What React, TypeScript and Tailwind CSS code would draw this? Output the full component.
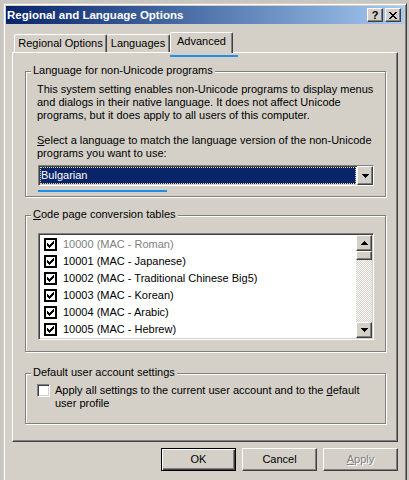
import React from 'react';

const raised =
  'border border-t-white border-l-white border-r-[#404040] border-b-[#404040] shadow-[inset_-1px_-1px_0_#808080]';
const sunken =
  'border border-t-[#808080] border-l-[#808080] border-r-white border-b-white shadow-[inset_1px_1px_0_#404040,inset_-1px_-1px_0_#d4d0c8]';

// 7x7 classic check mark
function CheckMark() {
  return (
    <svg width="7" height="7" viewBox="0 0 7 7" shapeRendering="crispEdges">
      <path
        d="M0 2h1v3H0z M1 3h1v3H1z M2 4h1v3H2z M3 3h1v3H3z M4 2h1v3H4z M5 1h1v3H5z M6 0h1v3H6z"
        fill="#000"
      />
    </svg>
  );
}

function Arrow({ up = false }: { up?: boolean }) {
  return (
    <svg width="7" height="4" viewBox="0 0 7 4" shapeRendering="crispEdges">
      <path
        d={
          up
            ? 'M3 0h1v1H3z M2 1h3v1H2z M1 2h5v1H1z M0 3h7v1H0z'
            : 'M0 0h7v1H0z M1 1h5v1H1z M2 2h3v1H2z M3 3h1v1H3z'
        }
        fill="#000"
      />
    </svg>
  );
}

function CloseGlyph() {
  return (
    <svg width="8" height="7" viewBox="0 0 8 7" shapeRendering="crispEdges">
      <path
        d="M0 0h2v1H0z M6 0h2v1H6z M1 1h2v1H1z M5 1h2v1H5z M2 2h4v1H2z M3 3h2v1H3z M2 4h4v1H2z M1 5h2v1H1z M5 5h2v1H5z M0 6h2v1H0z M6 6h2v1H6z"
        fill="#000"
      />
    </svg>
  );
}

function GroupBox({ title, className, children }: { title: React.ReactNode; className: string; children: React.ReactNode }) {
  return (
    <div
      className={`relative ml-[12px] w-[361px] border border-[#808080] shadow-[inset_1px_1px_0_#fff,1px_1px_0_#fff] ${className}`}
    >
      <span className="absolute -top-[8px] left-[5px] bg-[#d4d0c8] px-[2px] whitespace-nowrap">{title}</span>
      {children}
    </div>
  );
}

export default function App() {
  const pages = [
    { code: '10000 (MAC - Roman)', dim: true },
    { code: '10001 (MAC - Japanese)', dim: false },
    { code: '10002 (MAC - Traditional Chinese Big5)', dim: false },
    { code: '10003 (MAC - Korean)', dim: false },
    { code: '10004 (MAC - Arabic)', dim: false },
    { code: '10005 (MAC - Hebrew)', dim: false },
  ];

  return (
    <div className="relative w-[409px] h-[480px] overflow-hidden bg-[#c8c6c0] pl-[3px] pt-[3px] text-[11px] leading-[13px] text-black [font-family:'Liberation_Sans',Arial,sans-serif]">
      {/* dialog window */}
      <div className="w-[404px] h-[500px] bg-[#d4d0c8] border border-t-[#d4d0c8] border-l-[#d4d0c8] border-r-[#404040] border-b-[#404040] shadow-[inset_1px_1px_0_#fff,inset_-1px_-1px_0_#808080] p-[2px]">
        {/* title bar */}
        <div className="h-[18px] flex items-center bg-linear-to-r from-[#0a246a] to-[#a6caf0] pl-[1px] pr-[3px]">
          <span className="flex-1 font-bold text-white text-[11.5px]">Regional and Language Options</span>
          <div className="flex gap-[2px]">
            <div className={`w-[16px] h-[14px] bg-[#d4d0c8] flex items-center justify-center font-bold text-[11px] leading-none ${raised}`}>
              ?
            </div>
            <div className={`w-[16px] h-[14px] bg-[#d4d0c8] flex items-center justify-center ${raised}`}>
              <CloseGlyph />
            </div>
          </div>
        </div>

        {/* tabs */}
        <div className="mt-[8px] ml-[6px] pl-[2px] h-[20px] flex items-end">
          <div className="w-[93px] h-[18px] flex items-center justify-center border-t border-l border-r border-t-white border-l-white border-r-[#404040] rounded-t-[2px] shadow-[inset_-1px_0_0_#808080]">
            Regional Options
          </div>
          <div className="w-[63px] h-[18px] flex items-center justify-center border-t border-r border-t-white border-r-[#404040] rounded-t-[2px] shadow-[inset_-1px_0_0_#808080]">
            Languages
          </div>
          <div className="relative z-10 w-[63px] h-[21px] -mb-px pb-[3px] flex items-center justify-center bg-[#d4d0c8] border-t border-l border-r border-t-white border-l-white border-r-[#404040] rounded-t-[2px] shadow-[inset_-1px_0_0_#808080]">
            Advanced
          </div>
        </div>

        {/* tab page */}
        <div className="ml-[6px] w-[386px] h-[390px] border border-t-white border-l-white border-r-[#404040] border-b-[#404040] shadow-[inset_-1px_-1px_0_#808080]">
          <GroupBox title="Language for non-Unicode programs" className="mt-[18px] pt-[11px] pb-[10px] pl-[11px]">
            <p className="whitespace-nowrap">
              This system setting enables non-Unicode programs to display menus
              <br />
              and dialogs in their native language. It does not affect Unicode
              <br />
              programs, but it does apply to all users of this computer.
            </p>
            <p className="mt-[12px] whitespace-nowrap">
              <u>S</u>elect a language to match the language version of the non-Unicode
              <br />
              programs you want to use:
            </p>
            <div className={`mt-[5px] ml-[1px] w-[336px] h-[21px] flex bg-white ${sunken}`}>
              <div className="flex-1 m-[1px] mr-[1px] flex items-center bg-[#0a246a] border border-dotted border-[#e8d890] text-white">
                Bulgarian
              </div>
              <div className={`w-[16px] bg-[#d4d0c8] flex items-center justify-center ${raised}`}>
                <Arrow />
              </div>
            </div>
          </GroupBox>

          <GroupBox
            title={
              <>
                <u>C</u>ode page conversion tables
              </>
            }
            className="mt-[18px] pt-[17px] pb-[11px] pl-[12px]"
          >
            <div className={`w-[336px] h-[107px] flex bg-white ${sunken} p-px`}>
              <div className="flex-1 pt-px pl-[4px]">
                {pages.map((p) => (
                  <div key={p.code} className="h-[17px] flex items-center gap-[6px]">
                    <div className="w-[13px] h-[13px] border-2 border-black bg-white flex items-center justify-center">
                      <CheckMark />
                    </div>
                    <span className={p.dim ? 'text-[#808080]' : 'text-black'}>{p.code}</span>
                  </div>
                ))}
              </div>
              {/* vertical scrollbar */}
              <div className="w-[16px] flex flex-col">
                <div className={`h-[16px] bg-[#d4d0c8] flex items-center justify-center ${raised}`}>
                  <Arrow up />
                </div>
                <div className={`h-[9px] bg-[#d4d0c8] ${raised}`} />
                <div className="flex-1 bg-[repeating-conic-gradient(#d4d0c8_0%_25%,#ffffff_0%_50%)] bg-[length:2px_2px]" />
                <div className={`h-[16px] bg-[#d4d0c8] flex items-center justify-center ${raised}`}>
                  <Arrow />
                </div>
              </div>
            </div>
          </GroupBox>

          <GroupBox title="Default user account settings" className="mt-[21px] pt-[10px] pb-[13px] pl-[11px]">
            <div className="flex gap-[5px]">
              <div className={`w-[13px] h-[13px] shrink-0 bg-white ${sunken}`} />
              <p className="whitespace-nowrap">
                Apply all settings to the current user account and to the <u>d</u>efault
                <br />
                user profile
              </p>
            </div>
          </GroupBox>
        </div>

        {/* dialog buttons */}
        <div className="mt-[6px] mr-[6px] flex justify-end gap-[6px]">
          <div className="w-[75px] h-[23px] border border-black">
            <div className="w-full h-full flex items-center justify-center shadow-[inset_1px_1px_0_#fff,inset_-1px_-1px_0_#404040,inset_-2px_-2px_0_#808080]">
              OK
            </div>
          </div>
          <div className={`w-[75px] h-[23px] flex items-center justify-center ${raised}`}>Cancel</div>
          <div className={`w-[75px] h-[23px] flex items-center justify-center text-[#808080] [text-shadow:1px_1px_0_#fff] ${raised}`}>
            <span>
              <u>A</u>pply
            </span>
          </div>
        </div>
      </div>

      {/* blue annotation marks */}
      <div className="absolute left-[170px] top-[55px] w-[68px] h-[2px] bg-[#1e8fe6]" />
      <div className="absolute left-[38px] top-[190px] w-[129px] h-[2px] bg-[#1e8fe6]" />
    </div>
  );
}
